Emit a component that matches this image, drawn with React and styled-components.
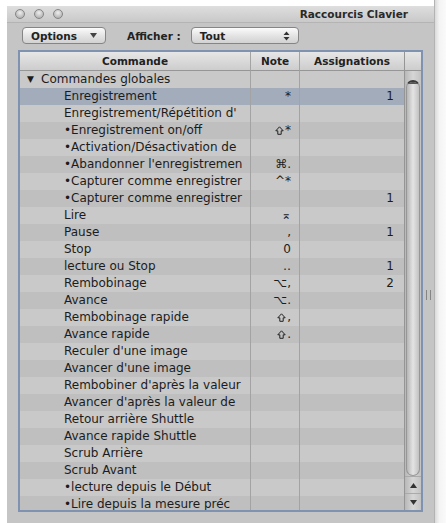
import React from 'react'
import styled, { createGlobalStyle } from 'styled-components'

const GlobalStyle = createGlobalStyle`
  body {
    margin: 0;
    background: #ffffff;
    font-family: "DejaVu Sans", "Liberation Sans", sans-serif;
  }
`

const Page = styled.div`
  display: flex;
  height: 523px;
  padding-left: 7px;
  overflow: hidden;
`
const Window = styled.div`
  width: 427px;
  margin-top: 6px;
  background: #c5c5c5;
  display: flex;
  flex-direction: column;
`
const TitleBar = styled.div`
  height: 16px;
  display: flex;
  align-items: center;
  padding-left: 8px;
  background: linear-gradient(#dedede, #c9c9c9);
  border-bottom: 1px solid #b4b4b4;
`
const Lights = styled.div`
  display: flex;
  gap: 9px;
`
const Light = styled.span`
  width: 8px;
  height: 8px;
  border-radius: 50%;
  background: radial-gradient(circle at 50% 35%, #eeeeee, #a2a2a2);
  border: 1px solid #858585;
`
const Title = styled.div`
  margin-left: auto;
  margin-right: 26px;
  font-size: 10.5px;
  font-weight: bold;
  color: #2a2a2a;
`
const Toolbar = styled.div`
  height: 27px;
  display: flex;
  align-items: flex-start;
  padding: 4px 0 0 15px;
  box-sizing: border-box;
`
const Button = styled.div`
  width: ${p => p.w}px;
  height: 17px;
  box-sizing: border-box;
  border: 1px solid #858585;
  border-radius: 4px;
  background: linear-gradient(#fbfbfb, #e0e0e0 60%, #d2d2d2);
  display: flex;
  align-items: center;
  justify-content: space-between;
  padding: 0 8px 0 8px;
  font-size: 10.5px;
  font-weight: bold;
  color: #222;
`
const Label = styled.div`
  margin: 3px 10px 0 21px;
  font-size: 10.5px;
  font-weight: bold;
  color: #222;
`
const Body = styled.div`
  display: flex;
  padding-left: 11px;
`
const Frame = styled.div`
  width: 405px;
  height: 462px;
  box-sizing: border-box;
  border: 2px solid #7f93b0;
  box-shadow: inset 0 0 0 1px #a3b1c5;
  display: flex;
  overflow: hidden;
`
const TableArea = styled.div`
  width: 384px;
  display: flex;
  flex-direction: column;
`
const Grid = styled.div`
  display: grid;
  grid-template-columns: 231px 49px 104px;
`
const HeadCell = styled.div`
  height: 18px;
  border-bottom: 1px solid #969696;
  border-right: 1px solid #a4a4a4;
  background: linear-gradient(#e6e6e6, #cdcdcd);
  font-size: 10.5px;
  font-weight: bold;
  color: #222;
  display: flex;
  align-items: center;
  justify-content: center;
  &:nth-child(3) { border-right: none; }
`
const Row = styled.div`
  display: contents;
`
const Cell = styled.div`
  height: 17px;
  box-sizing: border-box;
  background: ${p => (p.sel ? '#a3acbb' : p.odd ? '#bfbfbf' : '#c9c9c9')};
  border-right: ${p => (p.last ? 'none' : '1px solid #a3a3a3')};
  font-size: 12px;
  color: #1c1c1c;
  line-height: 17px;
  white-space: nowrap;
  overflow: hidden;
  padding-left: ${p => p.indent || 0}px;
  padding-right: ${p => p.pr || 0}px;
  text-align: ${p => p.align || 'left'};
`
const Tri = styled.span`
  display: inline-block;
  font-size: 9px;
  width: 14px;
  vertical-align: top;
`
const KeyIcon = styled.svg`
  vertical-align: -1px;
  margin-right: 1px;
`
const Scroll = styled.div`
  width: 17px;
  display: flex;
  flex-direction: column;
  border-left: 1px solid #959595;
  background: linear-gradient(90deg, #b8b8b8, #d6d6d6 50%, #c3c3c3);
`
const ScrollHead = styled.div`
  height: 18px;
  border-bottom: 1px solid #969696;
  background: linear-gradient(#e6e6e6, #cdcdcd);
`
const Track = styled.div`
  flex: 1;
  padding: 9px 1px 0 1px;
  display: flex;
`
const Thumb = styled.div`
  flex: 1;
  border: 1px solid #979797;
  border-top: 2px solid #3a3a3a;
  border-radius: 8px;
  background: linear-gradient(90deg, #b6b6b6, #e4e4e4 50%, #c1c1c1);
  box-shadow: inset 0 18px 0 -16px #555;
`
const Arrow = styled.div`
  height: 16px;
  display: flex;
  align-items: center;
  justify-content: center;
  border-top: 1px solid #aaaaaa;
`
const Side = styled.div`
  flex: 1;
  display: flex;
  align-items: flex-start;
  justify-content: center;
  padding-top: 240px;
`
const Grip = styled.div`
  width: 3px;
  height: 10px;
  border-left: 1px solid #858585;
  border-right: 1px solid #858585;
`
const RightStrip = styled.div`
  flex: 1;
  background: linear-gradient(90deg, #dadada, #f4f4f4 40%, #fafafa);
  border-left: 1px solid #b3b3b3;
`

const Shift = () => (
  <KeyIcon width="9" height="9" viewBox="0 0 9 9">
    <path d="M4.5 0.8 L8.2 4.8 H6.2 V8.3 H2.8 V4.8 H0.8 Z" fill="none" stroke="#222" strokeWidth="1" />
  </KeyIcon>
)

const rows = [
  { t: 'Commandes globales', group: true },
  { t: 'Enregistrement', n: '*', a: '1', sel: true },
  { t: "Enregistrement/Répétition d'" },
  { t: '•Enregistrement on/off', n: '*', shift: true },
  { t: '•Activation/Désactivation de' },
  { t: "•Abandonner l'enregistremen", n: '⌘.' },
  { t: '•Capturer comme enregistrer', n: '^*' },
  { t: '•Capturer comme enregistrer', a: '1' },
  { t: 'Lire', n: '⌅' },
  { t: 'Pause', n: ',', a: '1' },
  { t: 'Stop', n: '0' },
  { t: 'lecture ou Stop', n: '‥', a: '1' },
  { t: 'Rembobinage', n: '⌥,', a: '2' },
  { t: 'Avance', n: '⌥.' },
  { t: 'Rembobinage rapide', n: ',', shift: true },
  { t: 'Avance rapide', n: '.', shift: true },
  { t: "Reculer d'une image" },
  { t: "Avancer d'une image" },
  { t: "Rembobiner d'après la valeur" },
  { t: "Avancer d'après la valeur de" },
  { t: 'Retour arrière Shuttle' },
  { t: 'Avance rapide Shuttle' },
  { t: 'Scrub Arrière' },
  { t: 'Scrub Avant' },
  { t: '•lecture depuis le Début' },
  { t: '•Lire depuis la mesure préc' },
]

const Updown = () => (
  <svg width="7" height="10" viewBox="0 0 7 10">
    <path d="M3.5 0.5 L6.5 4 H0.5 Z M3.5 9.5 L6.5 6 H0.5 Z" fill="#333" />
  </svg>
)

const App = () => {
  return (
    <>
      <GlobalStyle />
      <Page>
        <Window>
          <TitleBar>
            <Lights>
              <Light />
              <Light />
              <Light />
            </Lights>
            <Title>Raccourcis Clavier</Title>
          </TitleBar>
          <Toolbar>
            <Button w={84}>
              Options
              <svg width="7" height="5" viewBox="0 0 7 5">
                <path d="M0 0 H7 L3.5 5 Z" fill="#444" />
              </svg>
            </Button>
            <Label>Afficher :</Label>
            <Button w={108}>
              Tout
              <Updown />
            </Button>
          </Toolbar>
          <Body>
            <Frame>
              <TableArea>
                <Grid>
                  <HeadCell>Commande</HeadCell>
                  <HeadCell>Note</HeadCell>
                  <HeadCell>Assignations</HeadCell>
                  {rows.map((r, i) => (
                    <Row key={i}>
                      <Cell sel={r.sel} odd={i % 2 === 1} indent={r.group ? 7 : 44}>
                        {r.group && <Tri>▼</Tri>}
                        {r.t}
                      </Cell>
                      <Cell sel={r.sel} odd={i % 2 === 1} align="right" pr={8}>
                        {r.shift && <Shift />}
                        {r.n}
                      </Cell>
                      <Cell sel={r.sel} odd={i % 2 === 1} align="right" pr={10} last>
                        {r.a}
                      </Cell>
                    </Row>
                  ))}
                </Grid>
              </TableArea>
              <Scroll>
                <ScrollHead />
                <Track>
                  <Thumb />
                </Track>
                <Arrow>
                  <svg width="7" height="5" viewBox="0 0 7 5">
                    <path d="M3.5 0 L7 5 H0 Z" fill="#333" />
                  </svg>
                </Arrow>
                <Arrow>
                  <svg width="7" height="5" viewBox="0 0 7 5">
                    <path d="M0 0 H7 L3.5 5 Z" fill="#333" />
                  </svg>
                </Arrow>
              </Scroll>
            </Frame>
            <Side>
              <Grip />
            </Side>
          </Body>
        </Window>
        <RightStrip />
      </Page>
    </>
  )
}

export default App
